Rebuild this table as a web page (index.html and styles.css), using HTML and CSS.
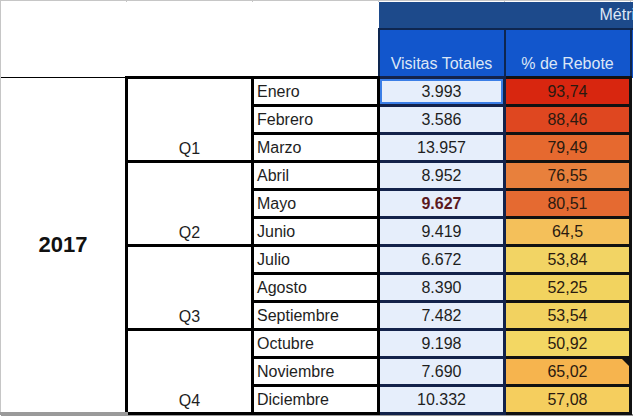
FILE: index.html
```html
<!DOCTYPE html>
<html lang="es">
<head>
<meta charset="utf-8">
<title>Métricas 2017</title>
<link rel="stylesheet" href="styles.css">
</head>
<body>
<table class="sheet">
  <colgroup>
    <col class="c-year"><col class="c-q"><col class="c-month"><col class="c-vis"><col class="c-reb"><col class="c-extra">
  </colgroup>
  <tr class="r-top"><td></td><td></td><td></td><td></td><td></td><td></td></tr>
  <tr class="r-h1">
    <td class="blank" colspan="3" rowspan="2"></td>
    <td class="metricas" colspan="3">Métricas</td>
  </tr>
  <tr class="r-h2">
    <td class="hd">Visitas Totales</td>
    <td class="hd">% de Rebote</td>
    <td class="hd hd-extra"></td>
  </tr>
  <tr>
    <td class="year" rowspan="12">2017</td>
    <td class="q" rowspan="3">Q1</td>
    <td class="month">Enero</td><td class="vis sel">3.993</td><td class="reb" style="background:#d8260f">93,74</td><td class="extra"></td>
  </tr>
  <tr><td class="month">Febrero</td><td class="vis">3.586</td><td class="reb" style="background:#df4720">88,46</td><td class="extra"></td></tr>
  <tr><td class="month">Marzo</td><td class="vis">13.957</td><td class="reb" style="background:#e6692f">79,49</td><td class="extra"></td></tr>
  <tr>
    <td class="q" rowspan="3">Q2</td>
    <td class="month">Abril</td><td class="vis">8.952</td><td class="reb" style="background:#e8803c">76,55</td><td class="extra"></td>
  </tr>
  <tr><td class="month">Mayo</td><td class="vis top">9.627</td><td class="reb" style="background:#e56a31">80,51</td><td class="extra"></td></tr>
  <tr><td class="month">Junio</td><td class="vis">9.419</td><td class="reb" style="background:#f4c05a">64,5</td><td class="extra"></td></tr>
  <tr>
    <td class="q" rowspan="3">Q3</td>
    <td class="month">Julio</td><td class="vis">6.672</td><td class="reb" style="background:#f2d464">53,84</td><td class="extra"></td>
  </tr>
  <tr><td class="month">Agosto</td><td class="vis">8.390</td><td class="reb" style="background:#f2d35f">52,25</td><td class="extra"></td></tr>
  <tr><td class="month">Septiembre</td><td class="vis">7.482</td><td class="reb" style="background:#f2d260">53,54</td><td class="extra"></td></tr>
  <tr>
    <td class="q" rowspan="3">Q4</td>
    <td class="month">Octubre</td><td class="vis">9.198</td><td class="reb" style="background:#f3d763">50,92</td><td class="extra"></td>
  </tr>
  <tr><td class="month">Noviembre</td><td class="vis">7.690</td><td class="reb note" style="background:#f6b44e">65,02</td><td class="extra"></td></tr>
  <tr><td class="month">Diciembre</td><td class="vis">10.332</td><td class="reb" style="background:#f5ce5e">57,08</td><td class="extra"></td></tr>
  <tr class="r-bottom"><td></td><td></td><td></td><td></td><td></td><td></td></tr>
</table>
</body>
</html>
```

FILE: styles.css
```css
html, body {
  margin: 0;
  padding: 0;
  background: #ffffff;
  overflow: hidden;
}

body {
  font-family: "Liberation Sans", Arial, sans-serif;
  font-size: 16px;
  color: #1e1e1e;
}

.sheet {
  border-collapse: collapse;
  table-layout: fixed;
  width: 633px;
}

.c-year, .c-q, .c-month, .c-vis, .c-reb { width: 126px; }
.c-extra { width: 3px; }

.sheet td {
  padding: 0;
  overflow: hidden;
  white-space: nowrap;
  line-height: 18px;
}

.r-top td {
  height: 1px;
  border-left: 1px solid #c6c6c6;
  border-top: 1px solid #c6c6c6;
}

.r-h1 td { height: 26px; }
.r-h2 td { height: 43px; }

.blank {
  border-left: 1px solid #c6c6c6;
  background: #ffffff;
}

.metricas {
  background: #1d4a8b;
  color: #dfe8f6;
  text-align: left;
  padding-left: 221px !important;
  border-bottom: 2px solid #0e2650;
}

.hd {
  background: #1256cc;
  color: #dce6f6;
  text-align: center;
  vertical-align: bottom;
  padding-bottom: 3px !important;
  border-left: 2px solid #0e2650;
  border-right: 2px solid #0e2650;
}

.hd-extra {
  border-right: none;
}

.sheet tr td.month,
.sheet tr td.vis,
.sheet tr td.reb,
.sheet tr td.extra {
  height: 25px;
}

.year {
  border-left: 1px solid #c6c6c6;
  border-top: 1px solid #000;
  border-bottom: 3px solid #9a9a9a;
  text-align: center;
  vertical-align: middle;
  font-weight: bold;
  font-size: 22px;
  color: #111;
}

.q {
  border: 3px solid #000;
  text-align: center;
  vertical-align: bottom;
  padding-bottom: 2px !important;
}

.month {
  border: 3px solid #000;
  padding-left: 3px !important;
  text-align: left;
}

.vis {
  background: #e6eefb;
  text-align: center;
  border: 3px solid #13224a;
}

.vis.sel {
  box-shadow: inset 0 0 0 2px #3b7ee6;
}

.vis.top {
  font-weight: bold;
  color: #5a1a1f;
}

.reb {
  text-align: center;
  border: 3px solid #111;
  color: #2a1a10;
}

.reb.note {
  position: relative;
}

.reb.note::after {
  content: "";
  position: absolute;
  top: 0;
  right: 0;
  border-top: 7px solid #111;
  border-left: 7px solid transparent;
}

.extra {
  border-left: 3px solid #000;
  background: #ffffff;
}

.r-bottom td {
  height: 4px;
  background: #9a9a9a;
}
```
